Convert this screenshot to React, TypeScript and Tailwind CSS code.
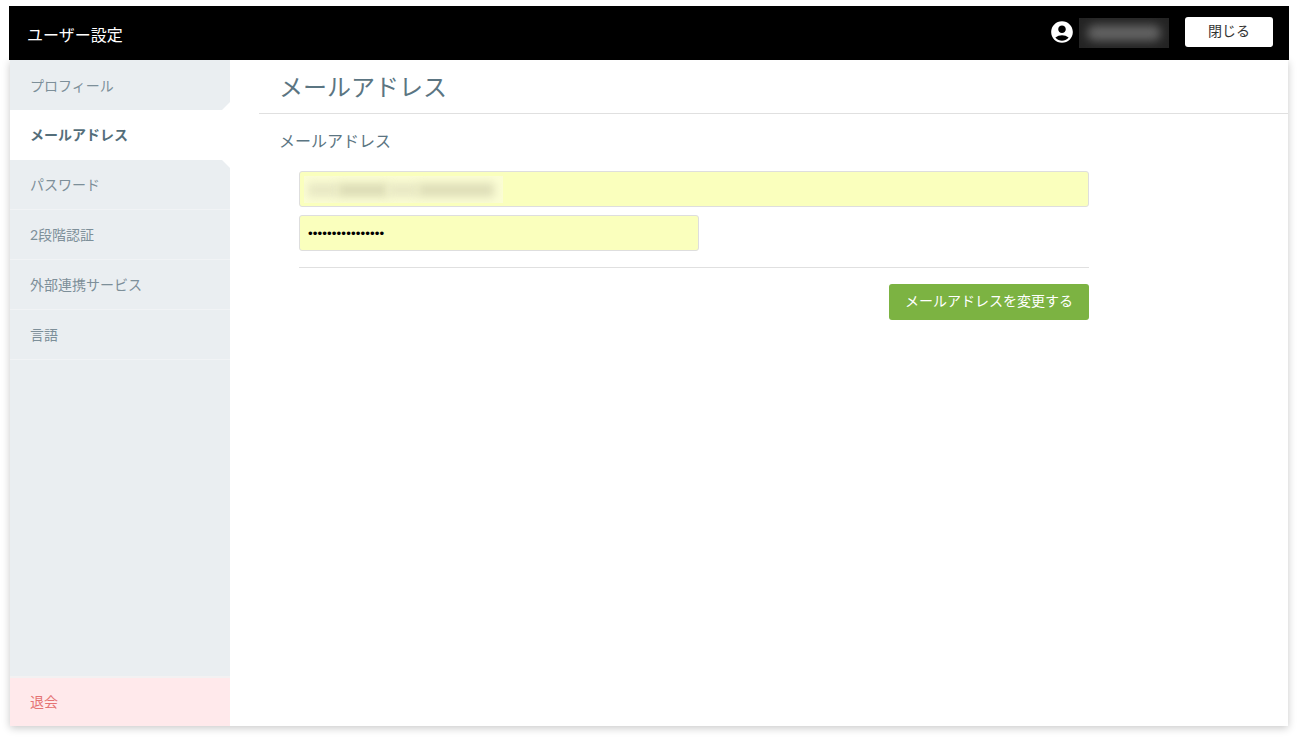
import { MdAccountCircle } from "react-icons/md";

const fontStack = "font-['Lato','Noto_Sans_CJK_JP',sans-serif]";

const menuItems = [
  { label: "プロフィール", className: "pt-0.5 [clip-path:polygon(0_0,100%_0,100%_42px,212px_100%,0_100%)]" },
  { label: "メールアドレス", active: true },
  { label: "パスワード", className: "border-b border-[#f1f3f5] [clip-path:polygon(0_0,212px_0,100%_8px,100%_100%,0_100%)]" },
  { label: "2段階認証", className: "border-b border-[#f1f3f5]" },
  { label: "外部連携サービス", className: "border-b border-[#f1f3f5]" },
  { label: "言語", className: "border-b border-[#f1f3f5]" },
];

function Sidebar() {
  return (
    <aside className="flex w-[220px] shrink-0 flex-col">
      <nav className="flex flex-col">
        {menuItems.map((item) =>
          item.active ? (
            <div key={item.label} className="flex h-[50px] items-center bg-white pl-5 text-sm font-bold text-[#546e7a]">
              {item.label}
            </div>
          ) : (
            <div
              key={item.label}
              className={`flex h-[50px] items-center bg-[#eaeef1] pl-5 text-sm text-[#7d8f99] ${item.className}`}
            >
              {item.label}
            </div>
          ),
        )}
      </nav>
      <div className="flex-1 bg-[#eaeef1]" />
      <div className="flex h-[50px] items-center border-t-2 border-[#f3f1f2] bg-[#ffe9eb] pl-5 text-sm text-[#e57373]">
        退会
      </div>
    </aside>
  );
}

function EmailForm() {
  return (
    <form className="flex w-[790px] flex-col">
      <div className="relative">
        <input
          readOnly
          type="text"
          className="h-9 w-full rounded-[3px] border border-[#dedede] bg-[#faffbd] px-2 outline-none"
        />
        <div className="absolute top-[5px] left-[5px] flex h-[27px] w-[199px] items-center overflow-hidden bg-[#fbfdd4]">
          <div className="ml-1 h-[14px] w-[30px] bg-[#e8e8c4] blur-[4px]" />
          <div className="h-[14px] w-[50px] bg-[#dcdcb6] blur-[4px]" />
          <div className="h-[14px] w-[30px] bg-[#e8e8c4] blur-[4px]" />
          <div className="h-[14px] w-[76px] bg-[#dedeb8] blur-[4px]" />
        </div>
      </div>
      <input
        readOnly
        type="password"
        value="aaaaaaaaaaaaaaaa"
        className="mt-2 h-9 w-[400px] rounded-[3px] border border-[#dedede] bg-[#faffbd] px-2 font-['Liberation_Sans',sans-serif] text-[13.33px] tracking-[0.1px] text-black outline-none"
      />
      <hr className="mt-4 border-[#e0e0e0]" />
      <div className="mt-4 flex justify-end">
        <button
          type="button"
          className="h-9 w-[200px] rounded-[3px] bg-[#7cb342] pb-0.5 text-sm text-white"
        >
          メールアドレスを変更する
        </button>
      </div>
    </form>
  );
}

export default function App() {
  return (
    <div className={`min-h-screen bg-white pt-[6px] pl-[9px] ${fontStack}`}>
      <div className="flex h-[720px] w-[1280px] flex-col">
        <header className="flex h-[54px] shrink-0 items-center justify-between bg-black pr-4 pl-[18px] text-white">
          <h1 className="pt-1 text-base font-normal">ユーザー設定</h1>
          <div className="flex items-center">
            <MdAccountCircle className="h-[26px] w-[26px] -translate-x-px -translate-y-px" />
            <div className="ml-[3px] flex h-[30px] w-[90px] items-center justify-center overflow-hidden bg-[#242424]">
              <div className="h-[16px] w-[74px] rounded-full bg-[#626262] blur-[5px]" />
            </div>
            <button
              type="button"
              className="ml-4 h-[30px] w-[88px] -translate-y-px rounded-[3px] bg-white pb-0.5 text-sm text-[#333]"
            >
              閉じる
            </button>
          </div>
        </header>
        <div className="mx-px flex flex-1 bg-white shadow-[0_2px_8px_rgba(0,0,0,0.22)]">
          <Sidebar />
          <main className="flex-1 pl-[29px]">
            <div className="flex h-[54px] items-center border-b border-[#e0e0e0] pl-5 text-2xl text-[#5b7582]">
              メールアドレス
            </div>
            <div className="pt-[15px] pl-5">
              <h2 className="text-base font-normal leading-6 text-[#5b7582]">メールアドレス</h2>
              <div className="mt-[18px] pl-5">
                <EmailForm />
              </div>
            </div>
          </main>
        </div>
      </div>
    </div>
  );
}
